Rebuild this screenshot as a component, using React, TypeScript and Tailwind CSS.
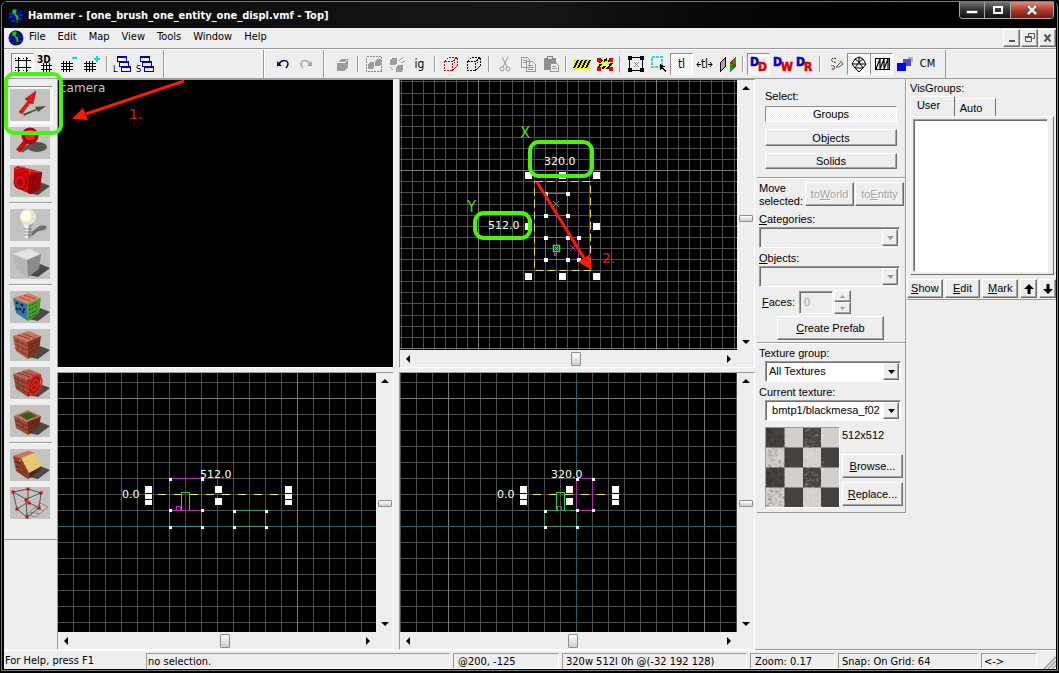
import type { ReactNode } from 'react'

const raised =
  'border border-t-white border-l-white border-r-[#6e6e6e] border-b-[#6e6e6e] shadow-[inset_-1px_-1px_0_#a4a4a4] bg-[#eeeeee]'
const sunken =
  'border border-t-[#9a9a9a] border-l-[#9a9a9a] border-r-white border-b-white shadow-[inset_1px_1px_0_#6e6e6e]'
const pressed =
  'border border-t-[#8e8e8e] border-l-[#8e8e8e] border-r-white border-b-white bg-[repeating-conic-gradient(#ffffff_0_25%,#eeeeee_0_50%)] bg-size-[2px_2px]'

/* ── Title bar and menu ─────────────────────────────────────── */

function HammerLogo() {
  return (
    <svg width="16" height="16" viewBox="0 0 16 16" aria-hidden="true">
      <circle cx="8" cy="8" r="7.500" fill="#0a0a7c" />
      <path d="M1 6h4M1 9h5M10 4h4M11 7h4M10 11h4M4 13h3" stroke="#1818d8" strokeWidth="2" />
      <path d="M4 6V2l3-1 2 1-1 4 2 1 1 5-2 3-1-5-2-4z" fill="#16c916" stroke="#032c03" strokeWidth="0.6" />
      <path d="M6 8l-3 3M10 3l3 2M9 13l3-1" stroke="#000" />
    </svg>
  )
}

function TitleBar() {
  return (
    <header className="flex h-[26px] shrink-0 items-start justify-between bg-linear-to-r from-[#0a0a0a] via-[#161616] to-black pl-1">
      <h1 className="flex items-center gap-1 pt-1.5 text-[11px] leading-4 font-bold text-white">
        <HammerLogo />
        Hammer - [one_brush_one_entity_one_displ.vmf - Top]
      </h1>
      <div className="mr-0.5 flex h-[17px] overflow-hidden rounded-b-[4px] border border-t-0 border-[#a9a9a9]">
        <button aria-label="Minimize" className="flex w-[25px] items-center justify-center border-r border-[#a9a9a9] bg-linear-to-b from-[#777] via-[#333] via-50% to-[#111]">
          <svg width="12" height="10"><rect x="0.5" y="5.5" width="11" height="3" fill="#fff" stroke="#555" /></svg>
        </button>
        <button aria-label="Maximize" className="flex w-[26px] items-center justify-center border-r border-[#a9a9a9] bg-linear-to-b from-[#777] via-[#333] via-50% to-[#111]">
          <svg width="12" height="10"><rect x="2" y="2" width="8" height="6" fill="none" stroke="#fff" strokeWidth="2" /></svg>
        </button>
        <button aria-label="Close" className="flex w-[42px] items-center justify-center bg-linear-to-b from-[#d98a7c] via-[#b13a2c] via-50% to-[#7c160c]">
          <svg width="14" height="10">
            <path d="M2 1l10 8M12 1L2 9" stroke="#555" strokeWidth="4" />
            <path d="M3 1l8 8M11 1l-8 8" stroke="#fff" strokeWidth="2.4" />
          </svg>
        </button>
      </div>
    </header>
  )
}

function MenuBar() {
  const items = ['File', 'Edit', 'Map', 'View', 'Tools', 'Window', 'Help']
  const mdi: [string, ReactNode][] = [
    ['Minimize view', <path d="M2 8h6" strokeWidth="2" />],
    ['Restore view', <path d="M3.5 3V.5h6v5H7.5M.5 3.5h6v5h-6zM1 4.5h5" />],
    ['Close view', <path d="M1.500 1.500l6 7M7.500 1.500l-6 7" strokeWidth="2" />],
  ]
  return (
    <nav className="flex h-[21px] shrink-0 items-center border-b border-[#9a9a9a] bg-[#eeeeee] pb-px pl-1 text-[11px]">
      <HammerLogo />
      <div className="ml-[5px] flex flex-1 gap-3">
        {items.map(item => <button key={item}>{item}</button>)}
      </div>
      <div className="flex gap-px">
        {mdi.map(([label, icon]) => (
          <button key={label} aria-label={label} className={`flex h-[18px] w-[17px] items-center justify-center ${raised}`}>
            <svg width="10" height="10" fill="none" stroke="#555">{icon}</svg>
          </button>
        ))}
      </div>
    </nav>
  )
}

/* ── Main toolbar ───────────────────────────────────────────── */

interface ToolProps {
  label: string
  active?: boolean
  children: ReactNode
}

function Tool({ label, active, children }: ToolProps) {
  return (
    <button
      aria-label={label}
      title={label}
      className={`flex h-[22px] w-[23px] items-center justify-center text-[11px] whitespace-nowrap ${active ? pressed : ''}`}
    >
      {children}
    </button>
  )
}

function Icon({ children }: { children: ReactNode }) {
  return (
    <svg width="18" height="18" fill="none" stroke="#000" shapeRendering="crispEdges" aria-hidden="true">
      {children}
    </svg>
  )
}

function Sep() {
  return (
    <div className="flex w-2 justify-center">
      <div className="h-4 w-0.5 border-r border-l border-r-white border-l-[#9a9a9a]" />
    </div>
  )
}

const smallGrid = <path d="M1 8.5h12M1 11.5h12M1 14.5h12M3.5 6v11M6.5 6v11M9.5 6v11" />

function Cascade({ letter }: { letter: string }) {
  return (
    <svg width="19" height="18" fill="none" shapeRendering="crispEdges" aria-hidden="true">
      <text x="0" y="17" fontSize="9" fill="#000">{letter}</text>
      <g stroke="#0000a8" fill="#eee">
        <rect x="4.5" y="1.5" width="9" height="5" />
        <path d="M4 2.5h10" />
        <rect x="6.5" y="6.5" width="9" height="5" />
        <path d="M6 7.5h10" />
        <rect x="8.5" y="11.5" width="9" height="5" />
        <path d="M8 12.5h10" />
      </g>
    </svg>
  )
}

const dashedCube = (
  <path d="M2.5 6.5h8v9h-8zM2.5 6.5l4-4h9l-5 4M15.5 2.5v8l-5 5M12.5 4v4" strokeDasharray="2 1" />
)

// Blue letter up and left, red letter down and right
function LetterPair({ front }: { front: string }) {
  return (
    <svg width="18" height="18" aria-hidden="true" overflow="visible" className="font-bold" strokeWidth="0.6">
      <text x="0" y="11" fontSize="12" fill="#0000cc" stroke="#0000cc">D</text>
      <text x="8" y="16" fontSize="12" fill="#d80000" stroke="#d80000">{front}</text>
    </svg>
  )
}

function Toolbar() {
  return (
    <div className="flex h-[30px] shrink-0 items-stretch border-t border-b border-t-white border-b-[#9a9a9a] bg-[#eeeeee]">
      <div className="flex w-[160px] items-center border-r border-[#9a9a9a] pl-[7px]">
        <Tool label="Toggle grid" active>
          <Icon><path d="M1 5.5h16M1 12.5h16M4.5 2v15M12.5 2v15" /><path d="M1 3.5h16M1 15.5h16" strokeDasharray="1 3" /></Icon>
        </Tool>
        <Tool label="Toggle 3D grid">
          <svg width="18" height="18" aria-hidden="true">
            <text x="0" y="8" fontSize="10" fontWeight="bold">3D</text>
            <path d="M4 10.5h11M4 14.5h11M6.5 8v9M9.5 8v9M12.5 8v9" stroke="#000" shapeRendering="crispEdges" />
          </svg>
        </Tool>
        <Tool label="Smaller grid"><Icon>{smallGrid}<path d="M12 3h5" stroke="#00e1f0" strokeWidth="2" /></Icon></Tool>
        <Tool label="Bigger grid"><Icon>{smallGrid}<path d="M11 4h6M14 1v6" stroke="#00e1f0" strokeWidth="2" /></Icon></Tool>
        <Sep />
        <Tool label="Load window state"><Cascade letter="L" /></Tool>
        <Tool label="Save window state"><Cascade letter="S" /></Tool>
      </div>
      <div className="w-[100px] border-r border-l border-r-[#9a9a9a] border-l-white" />
      <div className="flex w-[60px] items-center border-r border-l border-r-[#9a9a9a] border-l-white pl-1.5">
        <Tool label="Undo"><Icon><g shapeRendering="auto"><path d="M3 6v5h5z" fill="#00007b" stroke="none" /><path d="M5 9c3-5 9-4 9 0 0 2-1 3-2 4" stroke="#00007b" strokeWidth="1.5" /></g></Icon></Tool>
        <Tool label="Redo"><Icon><g shapeRendering="auto"><path d="M15 6v5h-5z" fill="#a5a5a5" stroke="none" /><path d="M13 9c-3-5-9-4-9 0 0 2 1 3 2 4" stroke="#a5a5a5" strokeWidth="1.5" /></g></Icon></Tool>
      </div>
      <div className="flex items-center border-r border-l border-r-[#9a9a9a] border-l-white pr-1.5 pl-1.5">
        <Tool label="Carve"><Icon><path d="M3 8l4-4h7v8l-3 4H3z" fill="#9c9c9c" stroke="none" /><path d="M4 7h7l2-2" stroke="#fff" /></Icon></Tool>
        <Sep />
        <Tool label="Group">
          <Icon>
            <rect x="1.5" y="1.5" width="15" height="15" stroke="#888" strokeDasharray="2 1" />
            <path d="M3 9l2-2h4v5l-1 2H3zM10 6l2-2h4v5l-1 2h-5z" fill="#9c9c9c" stroke="none" />
          </Icon>
        </Tool>
        <Tool label="Ungroup">
          <Icon>
            <path d="M2 5l2-2h5v5l-2 2H2zM8 12l2-2h5v5l-2 2H8z" fill="#9c9c9c" stroke="none" />
            <path d="M11 6l4-4M13 8l4-2M2 12l3 3" stroke="#999" />
          </Icon>
        </Tool>
        <Tool label="Ignore groups"><span className="text-[12px]">ig</span></Tool>
        <Sep />
        <Tool label="Hide selected"><Icon><g stroke="#c00000">{dashedCube}</g></Icon></Tool>
        <Tool label="Hide unselected"><Icon>{dashedCube}</Icon></Tool>
        <Sep />
        <Tool label="Cut"><Icon><g stroke="#999" shapeRendering="auto"><path d="M6 2l5 10M12 2L7 12" /><circle cx="6" cy="14" r="2" /><circle cx="12" cy="14" r="2" /></g></Icon></Tool>
        <Tool label="Copy">
          <Icon>
            <path d="M2.5 2.5h6l2 2v8h-8zM7.5 6.5h6l3 3v7h-9z" fill="#eee" stroke="#999" />
            <path d="M4 5.5h4M4 7.5h3M9 10.5h5M9 12.5h6M9 14.5h5" stroke="#999" />
          </Icon>
        </Tool>
        <Tool label="Paste">
          <Icon>
            <path d="M2 3h12v12H2z" fill="#8f8f8f" stroke="none" />
            <path d="M5.5 1.5h5v3h-5z" fill="#ddd" stroke="#888" />
            <path d="M8.5 8.5h6l2 2v6h-8z" fill="#eee" stroke="#999" />
            <path d="M10 11.5h4M10 13.5h5" stroke="#999" />
          </Icon>
        </Tool>
        <Sep />
        <Tool label="Toggle cordon">
          <Icon><path d="M1 4h16v10H1z" fill="#f4f000" stroke="none" /><path d="M1 13l4-8M5 13l4-8M9 13l4-8M13 13l4-8" strokeWidth="2" /></Icon>
        </Tool>
        <Tool label="Edit cordon">
          <Icon>
            <path d="M2 5h14v9H2z" fill="#f4f000" stroke="none" />
            <path d="M3 8l3-3M8 6l3-2M2 13l3-4M6 14l3-3M11 14l5-6M12 7l3-3" strokeWidth="2" />
            <path d="M7 8h5v3H7z" fill="#eee" stroke="none" />
            <path d="M1 3h4v4H1zM13 3h4v4h-4zM1 12h4v4H1zM13 12h4v4h-4z" fill="#e00000" stroke="none" />
          </Icon>
        </Tool>
        <Sep />
        <Tool label="Select by handles">
          <Icon>
            <rect x="2.5" y="2.5" width="13" height="13" />
            <path d="M1 1h4v4H1zM13 1h4v4h-4zM1 13h4v4H1zM13 13h4v4h-4z" fill="#000" stroke="none" />
            <path d="M7 7l5 5M12 7l-5 5" stroke="#888" />
          </Icon>
        </Tool>
        <Tool label="Auto selection">
          <Icon><rect x="2" y="2" width="10" height="10" stroke="#35d3df" strokeWidth="2" strokeDasharray="3 1" /><path d="M10 9v6l2-2 3 4 1-1-3-4h3z" fill="#000" stroke="none" /></Icon>
        </Tool>
        <Tool label="Texture lock" active><span className="text-[12px]">tl</span></Tool>
        <Tool label="Texture scale lock">
          <span className="flex items-center text-[12px]">
            <svg width="5" height="7"><path d="M5 3.5H1M3 1L1 3.500 3 6" fill="none" stroke="#000" /></svg>
            tl
            <svg width="5" height="7"><path d="M0 3.5h4M2 1l2 2.5L2 6" fill="none" stroke="#000" /></svg>
          </span>
        </Tool>
        <Tool label="Face alignment">
          <Icon>
            <path d="M1.5 7.5l5-5v9l-5 5z" fill="#aaa" />
            <path d="M11 7l6-6v10l-6 6z" fill="#12a012" stroke="none" />
            <path d="M11 7l3-3v5h3v2l-3 3v-5h-3z" fill="#d01010" stroke="none" />
          </Icon>
        </Tool>
        <Sep />
        <Tool label="Displacement mask solid" active><LetterPair front="D" /></Tool>
        <Tool label="Displacement walkable"><LetterPair front="W" /></Tool>
        <Tool label="Displacement remove"><LetterPair front="R" /></Tool>
        <Sep />
        <Tool label="Helpers">
          <Icon><g shapeRendering="auto"><path d="M9 4c-2-2-6 0-4 2s4 0 3 2" strokeDasharray="2 1" /><path d="M4 11c2-1 5 0 3 3M9 12l5-5 2 2-4 3z" stroke="#555" /><circle cx="6" cy="14" r="1" stroke="#b040b0" /><circle cx="14" cy="7" r="1" stroke="#a0a020" /></g></Icon>
        </Tool>
        <Tool label="Models in 2D" active>
          <Icon>
            <g shapeRendering="auto">
              <path d="M9 2l4 2 3 5-3 4-4 4-4-4-3-4 3-5zM5 4l4 3 4-3M2 9h14M9 2v5l-4 6M9 7l4 6M5 13h8" />
            </g>
          </Icon>
        </Tool>
        <Tool label="Model wireframe" active>
          <Icon><rect x="2.5" y="3.5" width="14" height="11" /><path d="M3 14l4-10v10l4-10v10l4-10v10" shapeRendering="auto" strokeWidth="1.2" /></Icon>
        </Tool>
        <Tool label="Fade preview">
          <Icon>
            <path d="M12 2h5v5h-5z" fill="#b4b4bc" stroke="none" />
            <path d="M7 4h8v7H7z" fill="#4a4ae0" stroke="none" />
            <path d="M1 8h9v8H1z" fill="#0000f5" stroke="none" />
          </Icon>
        </Tool>
        <Tool label="Collision model"><span>CM</span></Tool>
      </div>
    </div>
  )
}

/* ── Left tool palette ──────────────────────────────────────── */

const floor = <path d="M18 28l12-11 10 4-12 9z" fill="#4c4a48" />

function Cube({ top, left, right }: { top: string; left: string; right: string }) {
  return (
    <g>
      {floor}
      <path d="M3 7l16-5 12 5-14 6z" fill={top} />
      <path d="M3 7l14 6 1 17L6 22z" fill={left} />
      <path d="M17 13l14-6-2 15-11 8z" fill={right} />
    </g>
  )
}

const brickLines = (
  <path
    d="M4 11l13 6 13-6M5 15l12 6 12-6M5 19l12 7 12-7M8 10v3M13 12v3M8 17v3M13 19v3M21 15v3M26 12v3M22 20v3M8 6l12 4M13 5l12 4"
    fill="none"
    stroke="#5c2418"
    strokeWidth="0.6"
  />
)

const paletteIcons: Record<string, ReactNode> = {
  Selection: (
    <g>
      <path d="M13 25l13-5-1-2 11-1-8 6-1-2-13 6z" fill="#494949" />
      <path d="M9 23l9-11-3-2L26 2l-3 13-3-1-8 11z" fill="#e8161a" stroke="#8c0a0e" strokeWidth="0.5" />
    </g>
  ),
  Magnify: (
    <g>
      <ellipse cx="27" cy="20" rx="10" ry="5" fill="#555" />
      <path d="M11 24l8-5" stroke="#555" strokeWidth="4" />
      <path d="M8 24l9-11" stroke="#d0080c" strokeWidth="5" />
      <circle cx="20" cy="9" r="8.5" fill="#bd0509" />
      <circle cx="20" cy="8" r="6" fill="#e52a2a" stroke="#900" />
      <ellipse cx="18" cy="6" rx="3" ry="2" fill="#ff7a70" />
    </g>
  ),
  Camera: (
    <g>
      {floor}
      <path d="M4 3l4-2 12 3 12 3-2 18-9 4-8-3-7-4-2-9z" fill="#c8080c" />
      <path d="M19 10l13-3-2 17-9 5-3-1z" fill="#9c0508" />
      <path d="M5 4l8-2 8 4 10 1M19 9l2-5" stroke="#f34" fill="none" />
      <ellipse cx="10" cy="17" rx="6" ry="7" fill="#d81015" stroke="#8b0306" />
      <ellipse cx="10" cy="18" rx="3" ry="4" fill="#b00609" />
      <path d="M20 11l-1 16M25 9l-4 18" stroke="#6f0203" />
    </g>
  ),
  Entity: (
    <g>
      <path d="M19 25l9-7c4-3 11-1 8 2-3 2-6 1-9 3l-6 5z" fill="#6f6f6f" />
      <path d="M11 11h14l-4 8 1 9-4 2-4-2 1-9z" fill="#efefef" />
      <path d="M19 13l6-2-4 8 1 9-4 2z" fill="#9c9c9c" />
      <circle cx="18" cy="8" r="8" fill="#e6e6d8" />
      <circle cx="16" cy="7" r="5.5" fill="#ffffd8" />
      <path d="M14 20h8M14 23h8M14 26h8" stroke="#888" />
    </g>
  ),
  Block: <Cube top="#e4e4e4" left="#b7b7b7" right="#8a8a8a" />,
  'Toggle texture application': (
    <g>
      <Cube top="#d98367" left="#3578a8" right="#4e9b30" />
      <path d="M6 11l2 2M11 13l2 2M6 17l2 2M12 20l2 2M9 17l2 2M14 17v3" stroke="#0d2434" strokeWidth="2" />
      <path d="M19 15l9-4M19 19l9-4M19 23l9-4M19 27l8-5" stroke="#225c14" strokeDasharray="2 1" />
      <path d="M9 6l12 4M14 4l12 4" stroke="#a84c36" />
    </g>
  ),
  'Apply current texture': <g><Cube top="#cf755c" left="#ad5742" right="#803725" />{brickLines}</g>,
  'Apply decals': (
    <g>
      <Cube top="#b96350" left="#994a38" right="#6c2b1b" />
      {brickLines}
      <g fill="none" stroke="#f21818" strokeWidth="2" transform="rotate(20 25 18)">
        <ellipse cx="25" cy="18" rx="6" ry="10" />
        <ellipse cx="25" cy="18" rx="3" ry="5.5" />
        <path d="M25 16v4" />
      </g>
    </g>
  ),
  'Apply overlays': (
    <g>
      {floor}
      <path d="M4 11l14-6 13 6-14 6z" fill="#c27158" />
      <path d="M4 11l13 6 1 13L6 23z" fill="#9a4a36" />
      <path d="M17 17l14-6-2 11-11 8z" fill="#6e2c1b" />
      <path d="M9 10l10-3 8 4-10 4z" fill="#355f18" />
      <path d="M5 15l12 6 12-6M6 19l11 6 12-6M9 14v3M13 20v3M22 15v3" fill="none" stroke="#4c1b0d" strokeWidth="0.6" />
    </g>
  ),
  Clipping: (
    <g>
      {floor}
      <path d="M3 7l16-5 3 3-13 6 8 11 1 8L6 22z" fill="#963f29" />
      <path d="M3 7l16-5 6 2-12 6z" fill="#cd735b" />
      <path d="M5 12l6 3M6 17l9 5" stroke="#481709" />
      <path d="M11 9l13-5 8 13-13 7z" fill="#e3c772" />
      <path d="M19 24l13-7-3 5-11 8z" fill="#5c2110" />
      <path d="M11 9l8 15-1 6-10-7z" fill="#8b3a26" />
    </g>
  ),
  Vertex: (
    <g>
      <path d="M16 28l14-12 8 4-12 10zM20 25l10 2M24 20l10 4" fill="none" stroke="#8b8b8b" />
      <path d="M3 5l15-3 13 4-15 6zM3 5l4 17 10 8 12-9 2-15M16 12l1 18M18 2v13l11 6M18 15L7 22" fill="none" stroke="#555" />
      {[[3, 5], [18, 2], [31, 6], [16, 13], [19, 16], [7, 22], [29, 21], [17, 30]].map(([x, y]) => (
        <rect key={`${x}-${y}`} x={x - 1.5} y={y - 1.5} width="3" height="3" fill="#d00c0c" />
      ))}
    </g>
  ),
}

const paletteGroups = [
  ['Selection', 'Magnify', 'Camera'],
  ['Entity', 'Block'],
  ['Toggle texture application', 'Apply current texture', 'Apply decals', 'Apply overlays'],
  ['Clipping', 'Vertex'],
]

function Palette() {
  return (
    <aside className="w-[53px] shrink-0">
      <div className="relative flex h-[461px] flex-col items-center border-b border-[#9a9a9a] pt-[7px] pr-px">
        {paletteGroups.map((group, i) => (
          <div key={group[0]} className="flex flex-col items-center">
            {i > 0 && <div className="my-0.5 h-0.5 w-[43px] border-t border-b border-t-[#9a9a9a] border-b-white" />}
            {group.map(name => (
              <button
                key={name}
                aria-label={name}
                className={`flex h-[38px] w-[46px] items-center justify-center ${name === 'Selection' ? pressed : ''}`}
              >
                <svg width="40" height="32" className="bg-[#c2c2c0]" aria-hidden="true">{paletteIcons[name]}</svg>
              </button>
            ))}
          </div>
        ))}
        {/* highlight round the active tool */}
        <div className="pointer-events-none absolute -top-[7px] left-0 z-10 h-[63px] w-[59px] rounded-[10px] border-4 border-[#48f50a]" />
      </div>
    </aside>
  )
}

/* ── Viewports ──────────────────────────────────────────────── */

interface GridLinesProps {
  cx: number
  cy: number
  pitch: number
}

function lineColor(k: number) {
  if (k === 0) return '#1f6466'
  if (k % 16 === 0) return '#6b4426'
  return k % 8 === 0 ? '#7b7b7b' : '#4d4d4d'
}

// Minor lines come first, so that the major ones and the axes stay on top
const gridOrder = Array.from({ length: 121 }, (_, i) => i - 60).sort(
  (a, b) => Number(a % 8 === 0) - Number(b % 8 === 0) || Math.abs(b) - Math.abs(a)
)

function GridLines({ cx, cy, pitch }: GridLinesProps) {
  return (
    <g shapeRendering="crispEdges">
      {gridOrder.map(k => {
        const x = Math.round(cx + k * pitch)
        const y = Math.round(cy + k * pitch)
        return (
          <g key={k} fill={lineColor(k)}>
            {x >= 0 && <rect x={x} y="0" width="1" height="100%" />}
            {y >= 0 && <rect x="0" y={y} width="100%" height="1" />}
          </g>
        )
      })}
    </g>
  )
}

function Dots({ at, size }: { at: number[][]; size: number }) {
  return (
    <g fill="#fff" shapeRendering="crispEdges">
      {at.map(([x, y]) => <rect key={`${x}-${y}`} x={x} y={y} width={size} height={size} />)}
    </g>
  )
}

// Resize handles seen edge-on, for a selection with no height
function FlatHandles({ left, middle, right }: { left: number; middle: number; right: number }) {
  return (
    <g fill="#fff" shapeRendering="crispEdges">
      {[left, right].map(x => (
        <g key={x}>
          <rect x={x} y="113" width="7" height="7" />
          <rect x={x} y="121" width="7" height="5" />
          <rect x={x} y="127" width="7" height="5" />
        </g>
      ))}
      <rect x={middle} y="113" width="7" height="7" />
      <rect x={middle} y="125" width="7" height="7" />
    </g>
  )
}

const canvas = "block h-full w-full bg-black font-['DejaVu_Sans',sans-serif] text-[11px]"

function TopScene() {
  return (
    <svg className={canvas} role="img" aria-label="Top view">
      <GridLines cx={167} cy={179} pitch={11.1} />
      <g fill="none">
        <rect x="134.5" y="101.5" width="56" height="89" stroke="#e6e04a" strokeDasharray="8 4" />
        <rect x="145.5" y="113.5" width="22" height="22" stroke="#2f9a70" />
        <path d="M153 121l6 6M159 121l-6 6" stroke="#2f9a70" />
        <rect x="145.5" y="157.5" width="22" height="22" stroke="#3090a2" />
        <path d="M167.5 157.5h11v22h-11zM170 165l6 6M176 165l-6 6" stroke="#b02fb2" />
        <rect x="153.5" y="165.5" width="6" height="6" stroke="#37e03c" strokeWidth="1.5" />
        <path d="M155 167l3 3M158 167l-3 3" stroke="#37e0a0" />
        <rect x="154.5" y="173.5" width="2" height="2" stroke="#c02bc5" />
      </g>
      <Dots size={4} at={[[144, 112], [166, 112], [144, 134], [166, 134], [144, 156], [166, 156], [177, 156], [144, 178], [166, 178], [177, 178]]} />
      <Dots size={7} at={[[125, 92], [159, 92], [193, 92], [125, 143], [193, 143], [125, 193], [159, 193], [193, 193]]} />
      <text x="144" y="85" fill="#fff">320.0</text>
      <text x="88" y="149" fill="#fff">512.0</text>
      <g fill="none" stroke="#48f50a" strokeWidth="4">
        <rect x="130" y="62" width="62" height="34" rx="9" />
        <rect x="75" y="133" width="55" height="25" rx="9" />
      </g>
      <g fill="#52d422" fontSize="15">
        <text x="120" y="58">X</text>
        <text x="67" y="132">Y</text>
      </g>
      <path d="M137 102l47 76" stroke="#fa1a05" strokeWidth="3" />
      <path d="M192 190l-14-8 12-8z" fill="#fa1a05" />
      <text x="202" y="183" fill="#e0200c" fontSize="14">2.</text>
    </svg>
  )
}

function FrontScene() {
  return (
    <svg className={canvas} role="img" aria-label="Front view">
      <GridLines cx={111} cy={153} pitch={16} />
      <g fill="none" shapeRendering="crispEdges">
        <path d="M100 121.5h122" stroke="#f2ec4e" strokeDasharray="8 8" />
        <rect x="111.5" y="137.5" width="32" height="16" stroke="#3090a2" />
        <rect x="175.5" y="137.5" width="32" height="16" stroke="#2f9a70" />
        <path d="M111.5 105.5h32v32h-32zM118.5 137v-4h4v4" stroke="#b02fb2" />
        <path d="M123.5 137v-18h8v18" stroke="#37d03c" />
      </g>
      <Dots size={3} at={[[111, 105], [143, 105], [111, 136], [143, 136], [111, 153], [143, 153], [175, 137], [207, 137], [175, 153], [207, 153]]} />
      <FlatHandles left={87} middle={157} right={227} />
      <text x="142" y="105" fill="#fff">512.0</text>
      <text x="64" y="125" fill="#fff">0.0</text>
    </svg>
  )
}

function SideScene() {
  return (
    <svg className={canvas} role="img" aria-label="Side view">
      <GridLines cx={176} cy={153} pitch={16} />
      <g fill="none" shapeRendering="crispEdges">
        <path d="M133 121.5h75" stroke="#f2ec4e" strokeDasharray="8 8" />
        <rect x="144.5" y="137.5" width="32" height="16" stroke="#2f9a70" />
        <path d="M176.5 105.5h16v32h-16zM157.5 137v-4h4v4" stroke="#b02fb2" />
        <path d="M156.5 137v-18h8v18" stroke="#37d03c" />
      </g>
      <Dots size={3} at={[[176, 105], [192, 105], [176, 136], [192, 136], [144, 137], [144, 153], [176, 153]]} />
      <FlatHandles left={120} middle={166} right={212} />
      <text x="151" y="105" fill="#fff">320.0</text>
      <text x="97" y="125" fill="#fff">0.0</text>
    </svg>
  )
}

const pane = 'border border-t-[#9a9a9a] border-l-[#9a9a9a] border-r-white border-b-white min-w-0 min-h-0'

function CameraView() {
  return (
    <section className={pane}>
      <svg className={canvas} role="img" aria-label="Camera view">
        <text x="2" y="12" fill="#c4c4c4" fontSize="12">camera</text>
        <path d="M126 1L28 34" stroke="#fa1a05" strokeWidth="3" />
        <path d="M14 39l11-11 5 12z" fill="#fa1a05" />
        <text x="71" y="39" fill="#e0200c" fontSize="14">1.</text>
      </svg>
    </section>
  )
}

interface ViewportProps {
  hThumb: string
  vThumb: string
  children: ReactNode
}

function Arrow({ d, label }: { d: string; label: string }) {
  return (
    <button aria-label={label} className="flex h-4 w-4 items-center justify-center">
      <svg width="8" height="8"><path d={d} fill="#000" /></svg>
    </button>
  )
}

function Viewport({ hThumb, vThumb, children }: ViewportProps) {
  const thumb = 'rounded-[1px] border border-[#8f8f8f] bg-linear-to-b from-white to-[#cccccc]'
  return (
    <section className={`grid grid-cols-[minmax(0,1fr)_17px] grid-rows-[minmax(0,1fr)_17px] bg-[#eeeeee] ${pane}`}>
      <div className="min-h-0">{children}</div>
      <div className="flex flex-col items-center">
        <Arrow label="Scroll up" d="M0 6h8L4 2z" />
        <div className={vThumb} />
        <div className={`h-[7px] w-3.5 ${thumb}`} />
        <div className="flex-1" />
        <Arrow label="Scroll down" d="M0 2h8L4 6z" />
      </div>
      <div className="flex items-center">
        <Arrow label="Scroll left" d="M6 0v8L2 4z" />
        <div className={hThumb} />
        <div className={`h-3.5 w-2.5 ${thumb}`} />
        <div className="flex-1" />
        <Arrow label="Scroll right" d="M2 0v8l4-4z" />
      </div>
    </section>
  )
}

/* ── Side panels ────────────────────────────────────────────── */

function PushButton({ children, className = 'h-6', disabled }: { children: ReactNode; className?: string; disabled?: boolean }) {
  return (
    <button
      disabled={disabled}
      className={`flex items-center justify-center disabled:text-[#a2a2a2] disabled:[text-shadow:1px_1px_0_#fff] ${raised} ${className}`}
    >
      {children}
    </button>
  )
}

function Dropdown({ id, value, disabled }: { id: string; value: string; disabled?: boolean }) {
  return (
    <div className={`relative h-[21px] ${sunken} ${disabled ? 'bg-[#eeeeee]' : 'bg-white'}`}>
      <select id={id} disabled={disabled} className="h-full w-full appearance-none bg-transparent pr-5 pl-[3px] outline-none">
        <option>{value}</option>
      </select>
      <div className={`pointer-events-none absolute top-px right-px bottom-px flex w-4 items-center justify-center ${raised}`}>
        <svg width="7" height="4"><path d="M0 0h7L3.5 4z" fill={disabled ? '#999' : '#000'} /></svg>
      </div>
    </div>
  )
}

function TexturePreview() {
  const cells = Array.from({ length: 16 }, (_, i) => i)
  const specks = Array.from({ length: 420 }, (_, i) => ({
    x: (i * 37 + (i * i) % 23) % 74,
    y: (i * 53 + (i * i) % 31) % 80,
    o: 0.03 + (i % 5) * 0.02,
  }))
  return (
    <svg width="75" height="81" className="border border-t-[#9a9a9a] border-l-[#9a9a9a] border-r-white border-b-white bg-[#8a8886]" role="img" aria-label="Texture preview">
      {cells.map(i => {
        const col = i % 4
        const row = Math.floor(i / 4)
        return (
          <rect key={i} x={col * 18 + (col > 0 ? 1 : 0)} y={row * 20} width="18" height="19" fill={(col + row) % 2 ? '#d2cfcc' : '#454240'} />
        )
      })}
      {specks.map((s, i) => (
        <rect key={i} x={s.x} y={s.y} width="3" height="2" fill={i % 2 ? '#ffffff' : '#000000'} opacity={s.o} />
      ))}
    </svg>
  )
}

function ObjectPanel() {
  return (
    <div className="w-[149px] shrink-0 self-start border-r border-b border-[#9a9a9a]">
      <section className="flex h-[99px] flex-col border-b border-[#9a9a9a] pt-[9px] pr-2 pl-2">
        <p className="mb-0.5 leading-4">Select:</p>
        <div className="flex flex-col gap-[7px]">
          <button className={`h-4 leading-[14px] ${pressed}`}>Groups</button>
          <button className={`h-[17px] leading-[14px] ${raised}`}>Objects</button>
          <button className={`h-4 leading-[14px] ${raised}`}>Solids</button>
        </div>
      </section>

      <section className="h-[165px] border-t border-b border-t-white border-b-[#9a9a9a] pt-[3px] pr-[5px] pl-0.5">
        <div className="flex">
          <p className="w-[46px] shrink-0 leading-[13px]">Move selected:</p>
          <PushButton disabled className="h-6 w-[49px] shrink-0"><span>to<u>W</u>orld</span></PushButton>
          <PushButton disabled className="ml-px h-6 w-[49px] shrink-0"><span>to<u>E</u>ntity</span></PushButton>
        </div>
        <label htmlFor="categories" className="mt-[3px] block h-4 leading-4"><u>C</u>ategories:</label>
        <Dropdown id="categories" value="" disabled />
        <label htmlFor="objects" className="mt-0.5 block h-4 leading-4"><u>O</u>bjects:</label>
        <Dropdown id="objects" value="" disabled />
        <div className="mt-[3px] flex items-center pl-[3px]">
          <label htmlFor="faces" className="w-[37px]"><u>F</u>aces:</label>
          <input id="faces" defaultValue="0" disabled className={`h-[23px] w-[34px] pl-1 text-[#a2a2a2] ${sunken}`} />
          <div className="ml-px flex flex-col">
            <button disabled aria-label="More faces" className={`flex h-3 w-[17px] items-center justify-center ${raised}`}>
              <svg width="5" height="3"><path d="M0 3h5L2.5 0z" fill="#999" /></svg>
            </button>
            <button disabled aria-label="Fewer faces" className={`flex h-3 w-[17px] items-center justify-center ${raised}`}>
              <svg width="5" height="3"><path d="M0 0h5L2.5 3z" fill="#999" /></svg>
            </button>
          </div>
        </div>
        <PushButton className="mt-0.5 ml-[18px] h-6 w-[107px]"><span><u>C</u>reate Prefab</span></PushButton>
      </section>

      <section className="h-[169px] border-t border-white pt-px pr-1 pl-0.5">
        <label htmlFor="texgroup" className="block h-4 leading-4">Texture group:</label>
        <div className="ml-1.5"><Dropdown id="texgroup" value="All Textures" /></div>
        <label htmlFor="texture" className="mt-0.5 block h-4 leading-4">Current texture:</label>
        <div className="ml-1.5"><Dropdown id="texture" value={'\u00a0bmtp1/blackmesa_f02'} /></div>
        <div className="mt-1.5 -mr-0.5 ml-1.5 flex justify-between">
          <TexturePreview />
          <div className="flex w-[61px] flex-col gap-1">
            <p className="h-[23px] leading-4">512x512</p>
            <PushButton><span><u>B</u>rowse...</span></PushButton>
            <PushButton><span><u>R</u>eplace...</span></PushButton>
          </div>
        </div>
      </section>
    </div>
  )
}

function VisGroups() {
  return (
    <div className="flex h-[221px] min-w-0 flex-1 flex-col border-b border-l border-b-[#9a9a9a] border-l-white">
      <p className="h-4 pt-px pl-[3px] leading-4">VisGroups:</p>
      <div className="flex h-[21px] items-end pl-[3px]" role="tablist">
        <button role="tab" aria-selected="true" className="h-5 w-[45px] border border-b-0 border-t-white border-l-white border-r-[#6e6e6e] pb-1 pr-2 leading-4">User</button>
        <button role="tab" aria-selected="false" className="h-[18px] w-[41px] border border-b-0 border-l-0 border-t-white border-r-[#6e6e6e] pr-2 leading-4">Auto</button>
      </div>
      <div className="mr-0.5 ml-[3px] h-[159px] border border-t-white border-l-white border-r-[#6e6e6e] border-b-[#6e6e6e] p-0.5 pr-[5px]">
        <div className={`h-full bg-white ${sunken}`} />
      </div>
      <div className="mt-1 flex items-center gap-0.5">
        <PushButton className="h-[19px] flex-1"><span><u>S</u>how</span></PushButton>
        <PushButton className="h-[19px] flex-1"><span><u>E</u>dit</span></PushButton>
        <PushButton className="h-[19px] flex-1"><span><u>M</u>ark</span></PushButton>
        <button aria-label="Move up" className={`flex h-[19px] w-[17px] items-center justify-center ${raised}`}>
          <svg width="10" height="10"><path d="M5 0l5 5H6.5v5h-3V5H0z" /></svg>
        </button>
        <button aria-label="Move down" className={`flex h-[19px] w-[17px] items-center justify-center ${raised}`}>
          <svg width="10" height="10"><path d="M5 10l5-5H6.5V0h-3v5H0z" /></svg>
        </button>
      </div>
    </div>
  )
}

/* ── Status bar ─────────────────────────────────────────────── */

function StatusBar() {
  const cell = 'border border-t-[#9a9a9a] border-l-[#9a9a9a] border-r-white border-b-white h-4 leading-[15px] whitespace-nowrap'
  return (
    <footer className="flex h-[19px] shrink-0 items-end gap-[3px] border-t border-white bg-[#eeeeee] text-[11px]">
      <p className="w-[139px] pl-px leading-[17px]">For Help, press F1</p>
      <p className={`flex-1 pl-px ${cell}`}>no selection.</p>
      <p className={`w-[106px] pl-1 ${cell}`}>@200, -125</p>
      <p className={`w-[185px] pl-[3px] ${cell}`}>320w 512l 0h @(-32 192 128)</p>
      <p className={`w-[85px] pl-1 ${cell}`}>Zoom: 0.17</p>
      <p className={`w-[140px] pl-[3px] ${cell}`}>Snap: On Grid: 64</p>
      <p className={`w-14 pl-0.5 ${cell}`}>&lt;-&gt;</p>
      <div className="flex w-4 justify-end">
        <svg width="13" height="13"><path d="M1 13L13 1M5 13l8-8M9 13l4-4" stroke="#9a9a9a" strokeWidth="1.5" /></svg>
      </div>
    </footer>
  )
}

export default function App() {
  return (
    <div className="flex h-screen min-h-[640px] flex-col bg-black p-px pb-0.5 font-['DejaVu_Sans_Condensed','DejaVu_Sans',sans-serif] text-black">
      <div className="flex min-h-0 flex-1 flex-col rounded-t-[6px] border border-[#7c7c7c] pr-px pb-px pl-0.5">
        <TitleBar />
        <MenuBar />
        <Toolbar />
        <main className="flex min-h-0 flex-1 bg-[#eeeeee]">
          <Palette />
          <div className="grid min-w-0 flex-1 grid-cols-[337fr_356fr] grid-rows-[289fr_278fr] gap-x-[5px] gap-y-1">
            <CameraView />
            <Viewport hThumb="w-[46%]" vThumb="h-[44%]"><TopScene /></Viewport>
            <Viewport hThumb="w-[46%]" vThumb="h-[43%]"><FrontScene /></Viewport>
            <Viewport hThumb="w-[45%]" vThumb="h-[43%]"><SideScene /></Viewport>
          </div>
          <div className="flex w-[301px] shrink-0 border-b border-[#9a9a9a] pl-0.5 font-['Liberation_Sans',sans-serif] text-[11px]">
            <ObjectPanel />
            <VisGroups />
          </div>
        </main>
        <StatusBar />
      </div>
    </div>
  )
}
